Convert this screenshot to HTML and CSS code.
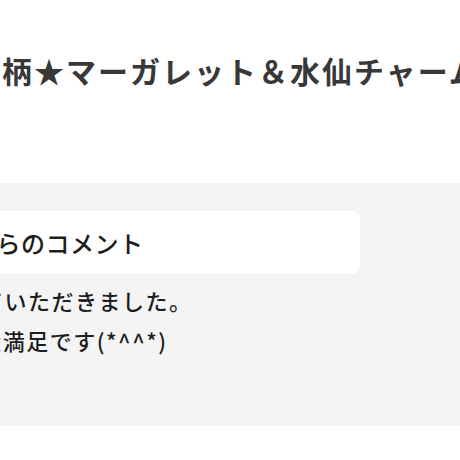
FILE: index.html
```html
<!DOCTYPE html>
<html lang="ja">
<head>
    <meta charset="UTF-8">
    <meta name="viewport" content="width=device-width, initial-scale=1.0">
    <link rel="stylesheet" href="styles.css">
</head>
<body>
<div class="page">
    <h1 class="item-title">花柄★マーガレット＆水仙チャームのピアス</h1>

    <div class="review-panel">
        <div class="review-head">ショップからのコメント</div>
        <p class="review-body">
            早速送っていただきました。<br>
            とっても大満足です(*^^*)
        </p>
    </div>
</div>
</body>
</html>
```

FILE: styles.css
```css
body {
    margin: 0;
    overflow: hidden;
    font-family: "Noto Sans CJK JP", "Noto Sans", sans-serif;
    color: #333;
    background: #fff;
}

/* the page is wider than the window, shifted so its left part is off screen */
.page {
    margin-left: -180px;
    width: 700px;
}

.item-title {
    margin: 50px 0 0;
    padding-left: 150px;
    font-size: 30px;
    font-weight: bold;
    line-height: 40px;
    letter-spacing: 2px;
    white-space: nowrap;
    color: #383838;
}

.review-panel {
    margin-top: 93px;
    padding: 28px 0 66px 40px;
    background: #f4f4f4;
}

.review-head {
    width: 500px;
    height: 63px;
    box-sizing: border-box;
    padding-left: 14px;
    line-height: 63px;
    font-size: 24px;
    font-weight: 500;
    letter-spacing: 0.5px;
    white-space: nowrap;
    background: #fff;
    border-radius: 8px;
    color: #1e1e1e;
}

.review-body {
    margin: 6px 0 0;
    padding-left: 28px;
    font-size: 22px;
    font-weight: 500;
    line-height: 40px;
    letter-spacing: 1.5px;
    white-space: nowrap;
    color: #1e1e1e;
}
```
